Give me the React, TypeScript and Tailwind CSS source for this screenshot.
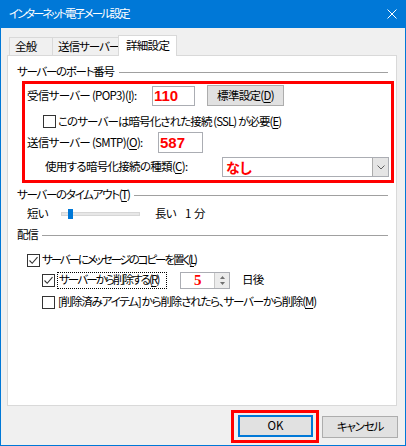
import React from "react";

const Key = ({ k }: { k: string }) => <span className="underline underline-offset-[2px]">{k}</span>;

function CheckBox({ checked }: { checked?: boolean }) {
  return (
    <div className="w-[13px] h-[13px] shrink-0 bg-white border border-[#333333] flex items-center justify-center">
      {checked && (
        <svg width="11" height="11" viewBox="0 0 11 11">
          <path d="M1.5 5.5 L4.2 8.3 L9.5 2.2" fill="none" stroke="#333333" strokeWidth="1.1" />
        </svg>
      )}
    </div>
  );
}

function Heading({ children }: { children: React.ReactNode }) {
  return (
    <div className="flex items-center h-[16px] pl-[9px] pr-[8px]">
      <span className="whitespace-nowrap tracking-[-1.3px]">{children}</span>
      <div className="flex-1 ml-[5px] border-t border-[#a0a0a0]" />
    </div>
  );
}

const redNum = "text-[#ff0000] text-[15px] tracking-normal font-['Liberation_Sans',sans-serif] font-bold";

export default function App() {
  return (
    <div className="w-[406px] h-[446px] bg-[#f0f0f0] border-x border-b border-[#0078d7] flex flex-col text-[11.5px] tracking-[-0.7px] leading-none text-black font-['Noto_Sans_CJK_JP',sans-serif] [font-feature-settings:'palt']">
      {/* title bar */}
      <div className="h-[28px] shrink-0 bg-[#0078d7] flex items-center justify-between pl-[8px] pr-[8px] text-white">
        <span className="tracking-[-2.1px]">インターネット電子メール設定</span>
        <svg width="10" height="10" viewBox="0 0 10 10">
          <path d="M0.5 0.5 L9.5 9.5 M9.5 0.5 L0.5 9.5" stroke="#ffffff" strokeWidth="1" />
        </svg>
      </div>

      {/* tabs */}
      <div className="mt-[7px] h-[20px] flex items-end ml-[8px] relative z-10 whitespace-nowrap">
        <div className="h-[18px] w-[43px] px-[5px] border-l border-t border-[#d9d9d9] flex items-center">全般</div>
        <div className="h-[18px] w-[66px] px-[5px] border-l border-t border-[#d9d9d9] flex items-center tracking-[-1px]">送信サーバー</div>
        <div className="h-[21px] -mb-px w-[59px] px-[7px] bg-white border-x border-t border-[#d9d9d9] flex items-center">詳細設定</div>
      </div>

      {/* panel */}
      <div className="ml-[6px] w-[390px] h-[351px] shrink-0 bg-white border border-[#d9d9d9] flex flex-col">
        <div className="mt-[8px]">
          <Heading>サーバーのポート番号</Heading>
        </div>

        <div className="mt-[1px] ml-[14px] w-[372px] h-[102px] border-[3px] border-[#ff0000] flex flex-col">
          <div className="mt-[1px] h-[21px] flex items-center pl-[2px]">
            <span className="w-[125px] whitespace-nowrap">受信サーバー (POP3)(<Key k="I" />):</span>
            <div className={`w-[43px] h-[20px] bg-white border border-[#abadb3] flex items-center pl-[1px] ${redNum}`}>110</div>
            <div className="ml-[12px] w-[77px] h-[21px] bg-[#e1e1e1] border border-[#adadad] flex items-center justify-center whitespace-nowrap">
              標準設定(<Key k="D" />)
            </div>
          </div>
          <div className="mt-[9px] h-[13px] flex items-center pl-[18px]">
            <CheckBox />
            <span className="ml-[2px] whitespace-nowrap tracking-[-0.9px]">このサーバーは暗号化された接続 (SSL) が必要(<Key k="E" />)</span>
          </div>
          <div className="mt-[4px] h-[21px] flex items-center pl-[2px]">
            <span className="w-[131px] whitespace-nowrap">送信サーバー (SMTP)(<Key k="O" />):</span>
            <div className={`w-[45px] h-[21px] bg-white border border-[#abadb3] flex items-center pl-[1px] ${redNum}`}>587</div>
          </div>
          <div className="mt-[4px] h-[20px] flex items-center pl-[20px]">
            <span className="w-[177px] whitespace-nowrap">使用する暗号化接続の種類(<Key k="C" />):</span>
            <div className="w-[167px] h-[20px] bg-white border border-[#abadb3] flex items-center justify-between">
              <span className="pl-[3px] text-[#ff0000] text-[14px] tracking-normal font-bold">なし</span>
              <div className="w-[16px] h-[18px] bg-[#e5e5e5] border-l border-[#acacac] flex items-center justify-center">
                <svg width="8" height="5" viewBox="0 0 8 5">
                  <path d="M0.5 0.5 L4 4 L7.5 0.5" fill="none" stroke="#606060" strokeWidth="1" />
                </svg>
              </div>
            </div>
          </div>
        </div>

        <div className="mt-[4px]">
          <Heading>
            サーバーのタイムアウト(<Key k="T" />)
          </Heading>
        </div>

        <div className="mt-[3px] h-[16px] flex items-center pl-[19px] whitespace-nowrap">
          <span className="w-[34px]">短い</span>
          <div className="w-[79px] h-[4px] bg-[#e7e7e7] border border-[#d6d6d6] flex items-center">
            <div className="ml-[6px] w-[5px] h-[10px] shrink-0 bg-[#0078d7]" />
          </div>
          <span className="ml-[15px] w-[30px]">長い</span>
          <span className="tracking-normal">1 分</span>
        </div>

        <div className="mt-[5px]">
          <Heading>配信</Heading>
        </div>

        <div className="mt-[9px] h-[16px] flex items-center pl-[19px]">
          <CheckBox checked />
          <span className="ml-[2px] whitespace-nowrap tracking-[-2.1px]">サーバーにメッセージのコピーを置く(<Key k="L" />)</span>
        </div>

        <div className="mt-[3px] h-[18px] flex items-center pl-[34px]">
          <CheckBox checked />
          <div className="ml-[2px] w-[110px] h-[17px] border border-dotted border-black flex items-center pl-[1px] whitespace-nowrap tracking-[-1.9px]">
            サーバーから削除する(<Key k="R" />)
          </div>
          <div className="ml-[13px] w-[50px] h-[17px] bg-white border border-[#abadb3] flex items-stretch">
            <div className="flex-1 flex items-center justify-center text-[#ff0000] text-[15px] font-bold font-['Liberation_Serif',serif]">5</div>
            <div className="w-[15px] bg-[#ececec] border-l border-[#c8c8c8] flex flex-col items-center justify-center gap-[3px]">
              <svg width="5" height="3" viewBox="0 0 5 3"><path d="M0 3 L2.5 0 L5 3 Z" fill="#707070" /></svg>
              <svg width="5" height="3" viewBox="0 0 5 3"><path d="M0 0 L2.5 3 L5 0 Z" fill="#707070" /></svg>
            </div>
          </div>
          <span className="ml-[12px]">日後</span>
        </div>

        <div className="mt-[5px] h-[16px] flex items-center pl-[34px]">
          <CheckBox />
          <span className="ml-[3px] whitespace-nowrap tracking-[-1.2px]">[削除済みアイテム] から削除されたら、サーバーから削除(<Key k="M" />)</span>
        </div>
      </div>

      {/* buttons */}
      <div className="mt-[4px] flex items-center justify-end pr-[7px]">
        <div className="border-[3px] border-[#ff0000] pl-[4px] pr-[3px] pt-[2px] pb-[3px]">
          <div className="w-[75px] h-[22px] bg-[#e1e1e1] border-2 border-[#0078d7] flex items-center justify-center tracking-normal">OK</div>
        </div>
        <div className="ml-[3px] w-[76px] h-[22px] bg-[#e1e1e1] border border-[#adadad] flex items-center justify-center tracking-[-1.2px]">
          キャンセル
        </div>
      </div>
    </div>
  );
}
